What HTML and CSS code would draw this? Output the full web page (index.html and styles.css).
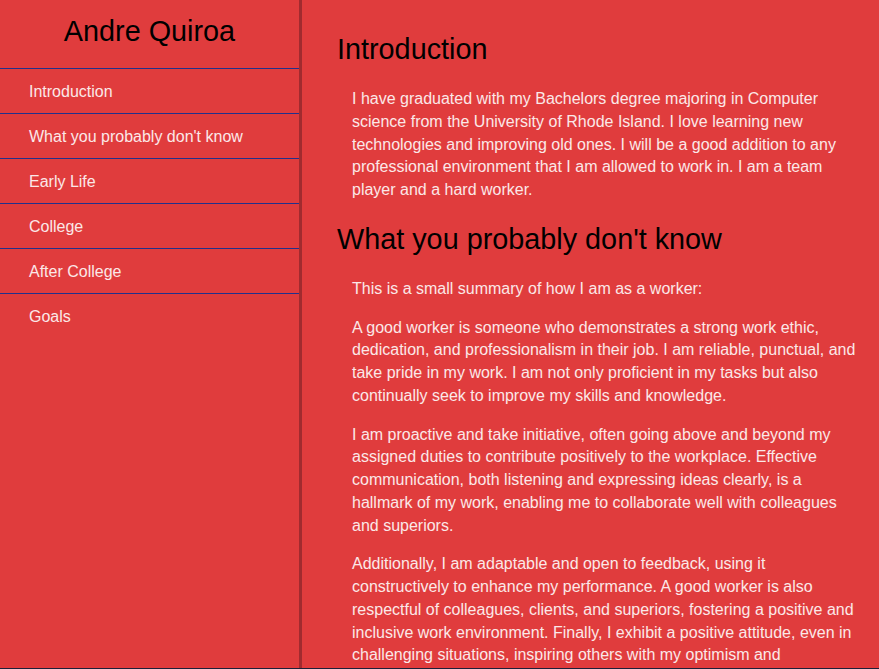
FILE: index.html
```html
<!DOCTYPE html>
<html lang="en">
<head>
<meta charset="utf-8">
<title>Andre Quiroa</title>
<link rel="stylesheet" href="styles.css">
</head>
<body>
<div class="page">
  <nav class="navbar" id="navbar">
    <header class="nav-title">Andre Quiroa</header>
    <a class="nav-link" href="#Introduction">Introduction</a>
    <a class="nav-link" href="#What_you_probably_don't_know">What you probably don't know</a>
    <a class="nav-link" href="#Early_Life">Early Life</a>
    <a class="nav-link" href="#College">College</a>
    <a class="nav-link" href="#After_College">After College</a>
    <a class="nav-link" href="#Goals">Goals</a>
  </nav>
  <main class="main-doc" id="main-doc">
    <section class="main-section" id="Introduction">
      <header class="section-title">Introduction</header>
      <p>I have graduated with my Bachelors degree majoring in Computer science from the University of Rhode Island. I love learning new technologies and improving old ones. I will be a good addition to any professional environment that I am allowed to work in. I am a team player and a hard worker.</p>
    </section>
    <section class="main-section" id="What_you_probably_don't_know">
      <header class="section-title">What you probably don't know</header>
      <p>This is a small summary of how I am as a worker:</p>
      <p>A good worker is someone who demonstrates a strong work ethic, dedication, and professionalism in their job. I am reliable, punctual, and take pride in my work. I am not only proficient in my tasks but also continually seek to improve my skills and knowledge.</p>
      <p>I am proactive and take initiative, often going above and beyond my assigned duties to contribute positively to the workplace. Effective communication, both listening and expressing ideas clearly, is a hallmark of my work, enabling me to collaborate well with colleagues and superiors.</p>
      <p>Additionally, I am adaptable and open to feedback, using it constructively to enhance my performance. A good worker is also respectful of colleagues, clients, and superiors, fostering a positive and inclusive work environment. Finally, I exhibit a positive attitude, even in challenging situations, inspiring others with my optimism and resilience.</p>
    </section>
  </main>
</div>
</body>
</html>
```

FILE: styles.css
```css
* {
  box-sizing: border-box;
}

html, body {
  margin: 0;
  padding: 0;
  height: 100%;
  overflow: hidden;
}

body {
  background: #e03c3d;
  font-family: "Liberation Sans", Arial, sans-serif;
  color: #fbe8e8;
}

.page {
  display: flex;
  height: 100vh;
  border-bottom: 1px solid #1c2038;
  overflow: hidden;
}

.navbar {
  flex: 0 0 302px;
  width: 302px;
  border-right: 3px solid #a12b2f;
  display: flex;
  flex-direction: column;
}

.nav-title {
  height: 68px;
  color: #000;
  font-size: 28.8px;
  text-align: center;
  padding-top: 15px;
  line-height: 33px;
}

.nav-link {
  display: block;
  height: 45px;
  border-top: 1px solid #22308c;
  padding: 1px 0 0 29px;
  line-height: 44px;
  font-size: 16px;
  color: #fbe8e8;
  text-decoration: none;
}

.main-doc {
  flex: 1;
  padding: 33px 23px 0 35px;
  overflow: hidden;
}

.main-section {
  display: block;
}

.section-title {
  display: block;
  color: #000;
  font-size: 28.8px;
  line-height: 33px;
  margin: 0 0 22px;
}

.main-section + .main-section .section-title {
  margin-top: 21px;
}

.main-section p {
  margin: 0 0 16px 15px;
  font-size: 16px;
  line-height: 22.75px;
}
```
